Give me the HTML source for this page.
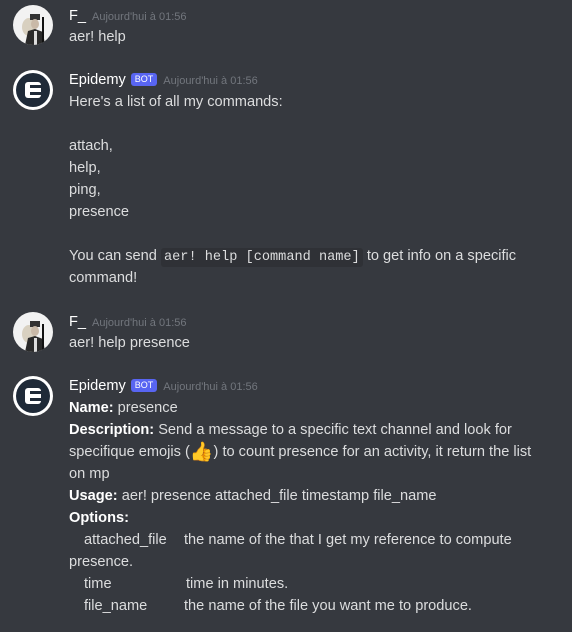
<!DOCTYPE html>
<html><head><meta charset="utf-8"><style>
body{margin:0;width:572px;height:632px;background:#36393f;font-family:"Liberation Sans","DejaVu Sans",sans-serif;color:#dcddde;overflow:hidden;position:relative}
.l{position:absolute;left:69px;font-size:14.6px;line-height:22px;white-space:nowrap}
.n{position:absolute;left:69px;font-size:14.6px;line-height:20px;color:#fff;font-weight:500;white-space:nowrap}
.ts{font-size:11px;color:#72767d;margin-left:6px}
.bot{display:inline-block;background:#5865f2;color:#fff;font-size:9px;line-height:13px;padding:0 4px;border-radius:3px;margin-left:5px;vertical-align:2px}
.av{position:absolute;left:13px;width:40px;height:40px;border-radius:50%;overflow:hidden}
.f{background:#f2f2f2}
.e{background:#fff}
code{font-family:"Liberation Mono",monospace;font-size:13.6px;background:#2f3136;padding:2px 3px;border-radius:3px}
b{color:#fff;font-weight:bold}
.emo{font-size:19px;line-height:14px;vertical-align:-2px;color:#f5c542}
</style></head><body>
<div class="av f" style="top:5px"><svg width="40" height="40" viewBox="0 0 40 40"><ellipse cx="16" cy="22" rx="7" ry="9" fill="#d8d0c0"/><rect x="17" y="9" width="10" height="6" fill="#333"/><ellipse cx="22" cy="19" rx="4" ry="5" fill="#c9b9a8"/><path d="M12 40 L15 26 L22 24 L30 27 L32 40Z" fill="#2a2a2a"/><rect x="21" y="26" width="3" height="14" fill="#ddd"/><rect x="29" y="12" width="2" height="28" fill="#111"/></svg></div>
<div class="n" style="top:6px">F_<span class="ts">Aujourd'hui à 01:56</span></div>
<div class="l" style="top:26px">aer! help</div>

<div class="av e" style="top:70px"><svg width="40" height="40" viewBox="0 0 40 40"><circle cx="20" cy="20" r="17" fill="#1f2a38"/><rect x="12" y="12" width="16" height="16" rx="3" fill="#fff"/><rect x="17" y="15" width="11" height="3" fill="#1f2a38"/><rect x="17" y="22" width="11" height="3" fill="#1f2a38"/><rect x="17" y="18.5" width="7" height="3" fill="#fff"/></svg></div>
<div class="n" style="top:70px">Epidemy<span class="bot">BOT</span><span class="ts">Aujourd'hui à 01:56</span></div>
<div class="l" style="top:91px">Here's a list of all my commands:</div>
<div class="l" style="top:135px">attach,</div>
<div class="l" style="top:157px">help,</div>
<div class="l" style="top:179px">ping,</div>
<div class="l" style="top:201px">presence</div>
<div class="l" style="top:245px">You can send <code>aer! help [command name]</code> to get info on a specific</div>
<div class="l" style="top:267px">command!</div>

<div class="av f" style="top:312px"><svg width="40" height="40" viewBox="0 0 40 40"><ellipse cx="16" cy="22" rx="7" ry="9" fill="#d8d0c0"/><rect x="17" y="9" width="10" height="6" fill="#333"/><ellipse cx="22" cy="19" rx="4" ry="5" fill="#c9b9a8"/><path d="M12 40 L15 26 L22 24 L30 27 L32 40Z" fill="#2a2a2a"/><rect x="21" y="26" width="3" height="14" fill="#ddd"/><rect x="29" y="12" width="2" height="28" fill="#111"/></svg></div>
<div class="n" style="top:312px">F_<span class="ts">Aujourd'hui à 01:56</span></div>
<div class="l" style="top:332px">aer! help presence</div>

<div class="av e" style="top:376px"><svg width="40" height="40" viewBox="0 0 40 40"><circle cx="20" cy="20" r="17" fill="#1f2a38"/><rect x="12" y="12" width="16" height="16" rx="3" fill="#fff"/><rect x="17" y="15" width="11" height="3" fill="#1f2a38"/><rect x="17" y="22" width="11" height="3" fill="#1f2a38"/><rect x="17" y="18.5" width="7" height="3" fill="#fff"/></svg></div>
<div class="n" style="top:376px">Epidemy<span class="bot">BOT</span><span class="ts">Aujourd'hui à 01:56</span></div>
<div class="l" style="top:397px"><b>Name:</b> presence</div>
<div class="l" style="top:419px"><b>Description:</b> Send a message to a specific text channel and look for</div>
<div class="l" style="top:441px">specifique emojis (<span class="emo">👍</span>) to count presence for an activity, it return the list</div>
<div class="l" style="top:463px">on mp</div>
<div class="l" style="top:485px"><b>Usage:</b> aer! presence attached_file timestamp file_name</div>
<div class="l" style="top:507px"><b>Options:</b></div>
<div class="l" style="top:529px;left:84px">attached_file</div>
<div class="l" style="top:529px;left:184px">the name of the that I get my reference to compute</div>
<div class="l" style="top:551px">presence.</div>
<div class="l" style="top:573px;left:84px">time</div>
<div class="l" style="top:573px;left:186px">time in minutes.</div>
<div class="l" style="top:595px;left:84px">file_name</div>
<div class="l" style="top:595px;left:184px">the name of the file you want me to produce.</div>
</body></html>
